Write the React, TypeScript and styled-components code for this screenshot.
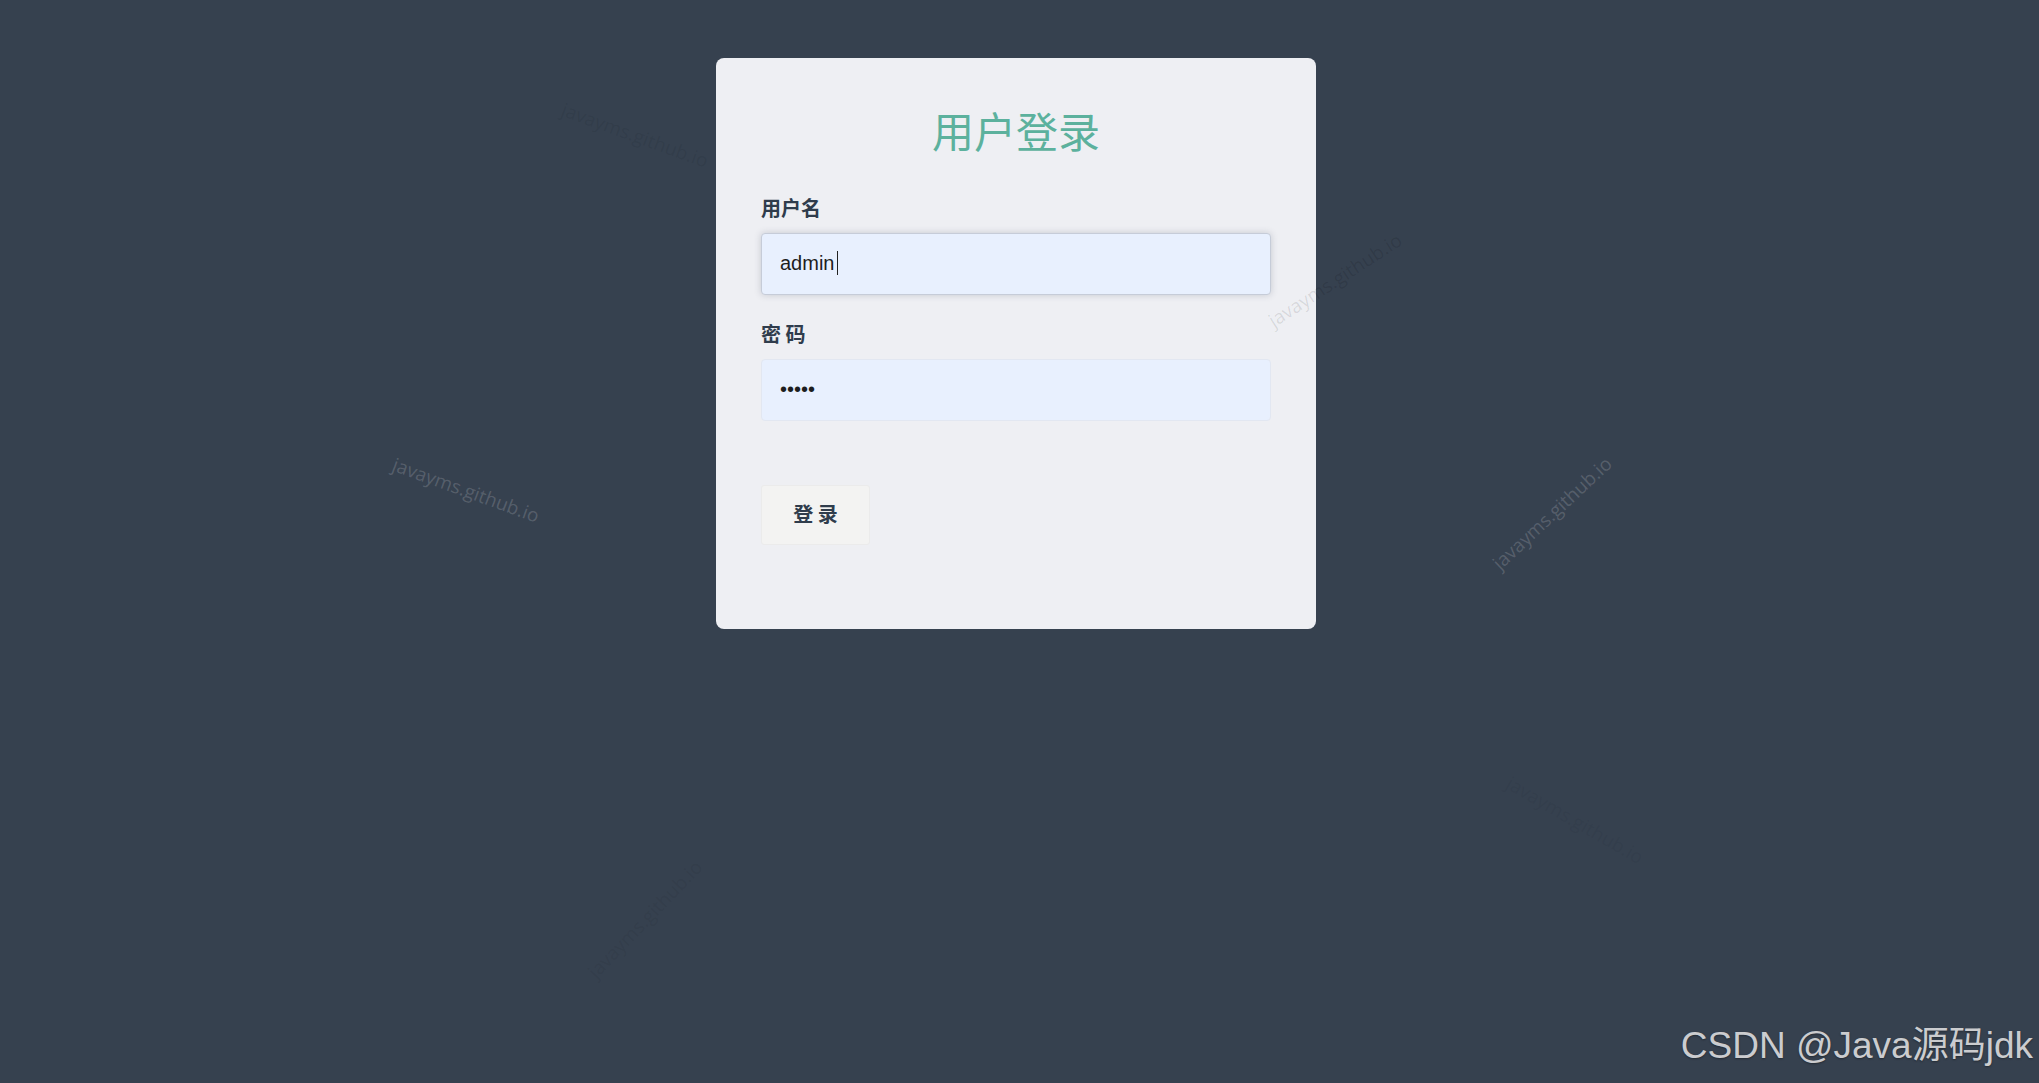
import styled, { createGlobalStyle } from "styled-components"

const GlobalStyle = createGlobalStyle`
  html, body {
    margin: 0;
    padding: 0;
    background: #36414f;
    font-family: "Liberation Sans", Arial, "Noto Sans CJK SC", sans-serif;
  }
  * { box-sizing: border-box; }
`

// Styles
const Page = styled.main`
  display: flex;
  justify-content: center;
  align-items: flex-start;
  min-height: 100vh;
  padding: 58px 7px 0 0;
  position: relative;
  overflow: hidden;
`
const Card = styled.section`
  background: #eeeff3;
  border-radius: 8px;
  padding: 47px 45px 84px;
  width: 600px;
`
const Title = styled.h1`
  color: #5cb19d;
  font-family: "Noto Sans CJK SC", sans-serif;
  font-size: 42px;
  font-weight: 400;
  line-height: 50px;
  margin: 0 0 39px;
  text-align: center;
`
const Field = styled.div`
  display: flex;
  flex-direction: column;
  gap: 11px;
  margin-bottom: 25px;
  position: relative;
`
const Label = styled.label`
  color: #2f3c4c;
  font-family: "Noto Sans CJK SC", sans-serif;
  font-size: 20px;
  font-weight: 700;
  line-height: 28px;
`
const Input = styled.input<{ $focused?: boolean }>`
  background: #e8f0fe;
  border: 1px solid ${p => (p.$focused ? "#c6ccd8" : "#e2e7f1")};
  border-radius: 4px;
  box-shadow: ${p => (p.$focused ? "0 0 7px rgba(60, 70, 90, 0.22)" : "none")};
  caret-color: transparent;
  color: #1d1d1d;
  font-family: "Liberation Sans", Arial, sans-serif;
  font-size: 20px;
  height: 62px;
  outline: none;
  padding: 0 18px 2px;
  width: 100%;
`
const Caret = styled.span`
  background: #222;
  height: 24px;
  left: 76px;
  position: absolute;
  bottom: 20px;
  width: 1px;
`
const Submit = styled.button`
  background: #f3f3f2;
  border: 1px solid #ebebeb;
  border-radius: 3px;
  color: #2f3c4c;
  cursor: pointer;
  font-family: "Noto Sans CJK SC", sans-serif;
  font-size: 20px;
  font-weight: 700;
  height: 60px;
  margin-top: 39px;
  padding: 0 0 4px;
  width: 109px;
`
const Watermark = styled.span<{ $tone: "light" | "dark" }>`
  color: ${p => (p.$tone === "light" ? "rgba(255, 255, 255, 0.17)" : "rgba(0, 0, 0, 0.1)")};
  font-family: "Open Sans", "Noto Sans", sans-serif;
  font-size: 19px;
  pointer-events: none;
  position: absolute;
  transform: translate(-50%, -50%);
  white-space: nowrap;
`
const Credit = styled.div`
  bottom: 14px;
  color: #cbcccf;
  font-family: "Liberation Sans", Arial, "Noto Sans CJK SC", sans-serif;
  font-size: 37px;
  position: absolute;
  right: 6px;
  text-shadow: 0 1px 2px rgba(0, 0, 0, 0.35);
`

const marks: { x: number; y: number; r: number; tone: "light" | "dark"; a: number }[] = [
  { x: 466, y: 490, r: 20, tone: "light", a: 1 },
  { x: 1335, y: 280, r: -33, tone: "dark", a: 1 },
  { x: 1552, y: 513, r: -43, tone: "light", a: 1 },
  { x: 635, y: 135, r: 20, tone: "dark", a: 0.55 },
  { x: 645, y: 919, r: -46, tone: "dark", a: 0.4 },
  { x: 1575, y: 820, r: 30, tone: "dark", a: 0.35 },
]

export default function App() {
  return (
    <Page>
      <GlobalStyle />
      <Card>
        <Title>用户登录</Title>
        <form onSubmit={e => e.preventDefault()}>
          <Field>
            <Label htmlFor="username">用户名</Label>
            <Input id="username" $focused defaultValue="admin" />
            <Caret />
          </Field>
          <Field>
            <Label htmlFor="password">密 码</Label>
            <Input id="password" type="password" defaultValue="12345" />
          </Field>
          <Submit type="submit">登 录</Submit>
        </form>
      </Card>
      {marks.map((m, i) => (
        <Watermark
          key={i}
          $tone={m.tone}
          style={{ left: m.x, top: m.y, opacity: m.a, transform: `translate(-50%, -50%) rotate(${m.r}deg)` }}
        >
          javayms.github.io
        </Watermark>
      ))}
      <Credit>CSDN @Java源码jdk</Credit>
    </Page>
  )
}
